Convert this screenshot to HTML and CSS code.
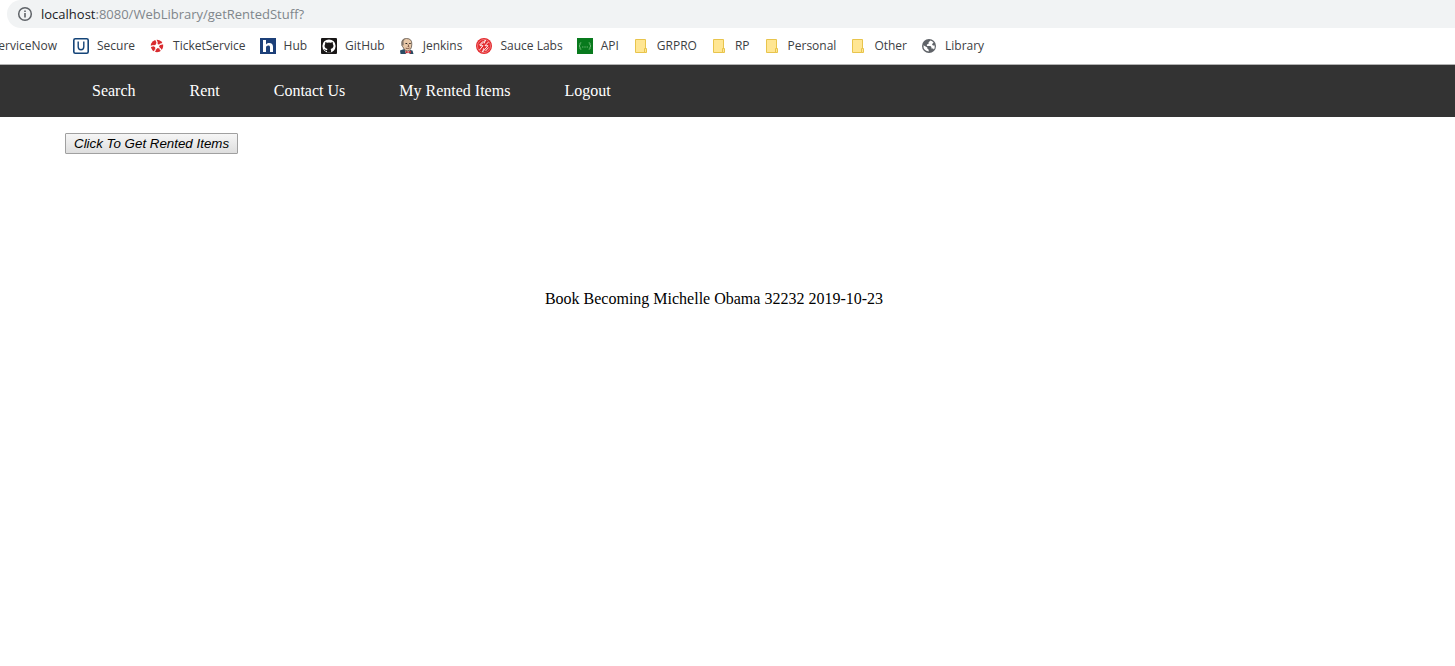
FILE: index.html
```html
<!DOCTYPE html>
<html lang="en">
<head>
<meta charset="utf-8">
<title>Library</title>
<link rel="stylesheet" href="styles.css">
</head>
<body>
<header class="browser">
  <div class="address">
    <svg class="info" viewBox="0 0 16 16"><circle cx="8" cy="8" r="6.3" fill="none" stroke="#5f6368" stroke-width="1.5"/><path d="M7.2 4.5h1.6v1.6H7.2zM7.2 7.1h1.6v4.4H7.2z" fill="#5f6368"/></svg>
    <span class="url"><span class="host">localhost</span>:8080/WebLibrary/getRentedStuff?</span>
  </div>
  <nav class="bookmarks" aria-label="Bookmarks">
    <a class="bookmark clipped" href="#">ServiceNow</a>
    <a class="bookmark" href="#"><svg class="icon" viewBox="0 0 16 16"><rect x=".8" y=".8" width="14.4" height="14.4" rx="1.5" fill="#fff" stroke="#144478" stroke-width="1.6"/><path d="M5.2 3.6v5.2q0 3 2.8 3t2.8-3V3.6" fill="none" stroke="#144478" stroke-width="1.4"/></svg>Secure</a>
    <a class="bookmark" href="#"><svg class="icon" viewBox="0 0 16 16"><circle cx="8" cy="8" r="6.200" fill="#d92b2f"/><path d="M8 3.800l1 2.600 3-.4-2 2.200 1.600 2.800-2.900-1L6.300 12.200l-.1-3-2.700-1.600 2.900-.6z" fill="#fff"/><path d="M6.500 1l1.800 3.800M14.500 5.500l-3.600.8M12.800 13l-2-2.500M5 14.500l1.500-3M1 8.600l3.500-1" stroke="#fff" stroke-width="1.300"/></svg>TicketService</a>
    <a class="bookmark" href="#"><svg class="icon" viewBox="0 0 16 16"><path fill="#1d4079" d="M0 0h16v16H0z"/><path d="M3 2h3v4.500C7 5.200 8 5 9.200 5 11.800 5 13 6.500 13 8.800V14h-3V9.300C10 8 9.500 7.400 8.300 7.400 6.900 7.400 6 8.200 6 9.700V14H3z" fill="#fff"/></svg>Hub</a>
    <a class="bookmark" href="#"><svg class="icon" viewBox="0 0 16 16"><rect width="16" height="16" rx="1" fill="#191717"/><circle cx="8" cy="8" r="6.600" fill="#fff"/><path d="M4.300 4l1.900.8q1.800-.4 3.600 0L11.700 4l.2 2q1 1.400.4 3.100-.6 1.500-2.700 1.800.5.600.5 1.300v2.400H6v-1.600q-1.800.3-2.400-1.200l-.7-.8q1-.2 1.600.8.500.7 1.500.3.100-.8.500-1.200-2.200-.3-2.800-1.800-.5-1.700.4-3.100z" fill="#191717"/></svg>GitHub</a>
    <a class="bookmark" href="#"><svg class="icon" viewBox="0 0 16 16"><path d="M1 12.500l5-1.700 7.500 1.700L14.500 16H1.500z" fill="#284b63"/><path d="M5.500 11l5.500-.5L10.500 16H7z" fill="#eee"/><path d="M2.800 6Q2.300.5 7.500.5q5.600 0 5.300 5.800-.1 6.200-4.500 6.700-3 0-4.500-4.200Q2.500 8 2.800 6z" fill="#e7c7a7" stroke="#4a4038" stroke-width=".7"/><path d="M3 7Q1.800 1.300 6 .8L4.500 3.200l.2 3.300L4 8z" fill="#85776b"/><path d="M6.500 5.500h1.700m2 0h1.500" stroke="#292522"/><path d="M9 6.300l.9 2.200H8.700M6.700 10.200q2 .8 4-.2" fill="none" stroke="#6c4334" stroke-width=".8"/><path d="M6.500 12.800l2.600 1 2.800-1.200v3l-2.700-1-2.700 1z" fill="#c93036"/></svg>Jenkins</a>
    <a class="bookmark" href="#"><svg class="icon" viewBox="0 0 16 16"><circle cx="8" cy="8" r="8" fill="#e3282c"/><circle cx="8" cy="8" r="6.500" fill="none" stroke="#f6a5a5" stroke-width=".6"/><path d="M9.500 2L4 7.700h3L3.500 12M12.500 4L9 7.700h3L6.500 14M9.500 2L8.200 5.500M6.500 14l1.300-3.800M3.500 7L7 3.300M12.500 9.500L9.500 13" fill="none" stroke="#fff" stroke-width=".9"/></svg>Sauce Labs</a>
    <a class="bookmark" href="#"><svg class="icon" viewBox="0 0 16 16"><path fill="#087a1d" d="M0 0h16v16H0z"/><path d="M4.300 4.800H3.600Q3 4.800 3 5.500v1.700L2 8l1 .8v1.700q0 .7.600.7h.7M11.700 4.800h.7q.6 0 .6.700v1.700l1 .8-1 .8v1.700q0 .7-.6.700h-.7" fill="none" stroke="#8dcc91" stroke-width=".8"/><path d="M5.300 8.500h1v1h-1zM7.500 8.500h1v1h-1zM9.700 8.500h1v1h-1z" fill="#8dcc91"/></svg>API</a>
    <a class="bookmark" href="#"><svg class="icon" viewBox="0 0 16 16"><path class="folder" d="M2.500 1.500h10v13h-10z"/><path class="folder" d="M11.500 10.500h2v4h-2z"/></svg>GRPRO</a>
    <a class="bookmark" href="#"><svg class="icon" viewBox="0 0 16 16"><path class="folder" d="M2.500 1.500h10v13h-10z"/><path class="folder" d="M11.500 10.500h2v4h-2z"/></svg>RP</a>
    <a class="bookmark" href="#"><svg class="icon" viewBox="0 0 16 16"><path class="folder" d="M2.500 1.500h10v13h-10z"/><path class="folder" d="M11.500 10.500h2v4h-2z"/></svg>Personal</a>
    <a class="bookmark" href="#"><svg class="icon" viewBox="0 0 16 16"><path class="folder" d="M2.500 1.500h10v13h-10z"/><path class="folder" d="M11.500 10.500h2v4h-2z"/></svg>Other</a>
    <a class="bookmark" href="#"><svg class="icon" viewBox="0 0 16 16"><circle cx="8" cy="8" r="7" fill="#5f6368"/><path d="M9.500 2.500L7.600 4.300v1.400L5.900 6.500v1.400h3.500l1 1v1.700h1.700l.8 1Q14 10 13.700 7.500h-1.800L11 6.200l1.600-1.700Q11.200 3 9.500 2.500zM2.500 7.300Q2 12.800 7.700 13.600v-1.800L6.300 10.600V9.400z" fill="#fff"/></svg>Library</a>
  </nav>
</header>
<nav class="menu" aria-label="Main">
  <a href="#">Search</a>
  <a href="#">Rent</a>
  <a href="#">Contact Us</a>
  <a href="#">My Rented Items</a>
  <a href="#">Logout</a>
</nav>
<main class="content">
  <form class="actions"><button class="fetch" type="button">Click To Get Rented Items</button></form>
  <p class="result">Book Becoming Michelle Obama 32232 2019-10-23</p>
</main>
</body>
</html>
```
FILE: styles.css
```css
* {
  box-sizing: border-box;
}

body {
  margin: 0;
  background: #fff;
  color: #000;
  font: 16px/20px "Liberation Serif", "Times New Roman", serif;
}

a {
  color: inherit;
  text-decoration: none;
}

.browser {
  border-bottom: 1px solid #b3b3b3;
  font-family: "Open Sans", sans-serif;
  overflow: hidden;
}

.address {
  display: flex;
  align-items: center;
  gap: 8px;
  height: 28px;
  margin-left: 7px;
  padding-left: 10px;
  border-radius: 14px 0 0 14px;
  background: #f1f3f4;
  color: #80868b;
  font-size: 13px;
}

.info,
.icon {
  flex: none;
  width: 16px;
  height: 16px;
}

.host {
  color: #202124;
}

.bookmarks {
  display: flex;
  align-items: center;
  gap: 14px;
  height: 36px;
  color: #3c4043;
  font-size: 12px;
}

.bookmark {
  display: flex;
  align-items: center;
  gap: 8px;
  white-space: nowrap;
}

.clipped {
  justify-content: flex-end;
  width: 59px;
  padding-right: 2px;
}

.folder {
  fill: #ffe693;
  stroke: #e8c44c;
}

.menu {
  display: flex;
  padding: 0 65px;
  background: #333;
  color: #fff;
}

.menu a {
  padding: 16px 27px;
}

.content {
  padding-top: 16px;
}

.actions {
  display: flex;
  padding: 0 65px;
}

.fetch {
  padding: 1px 8px;
  border: 1px solid #a0a0a0;
  border-radius: 1px;
  background: linear-gradient(#f6f6f6, #dedede);
  color: #000;
  font-family: "Liberation Sans", Arial, sans-serif;
  font-style: italic;
  line-height: 17px;
}

.result {
  margin: 135px 0 0;
  padding-right: 27px;
  text-align: center;
}
```
